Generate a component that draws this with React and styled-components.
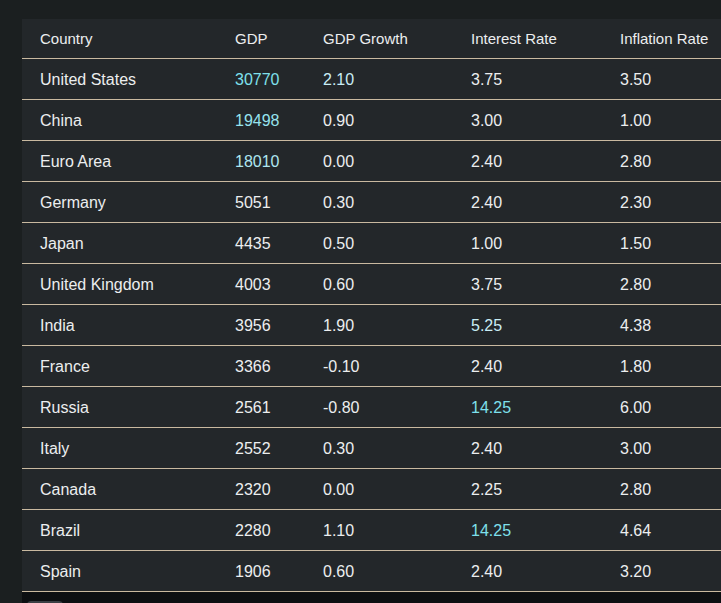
import React from "react";
import styled, { createGlobalStyle } from "styled-components";

const Global = createGlobalStyle`
  html, body { margin: 0; padding: 0; background: #1b1f20; overflow: hidden; }
  body { font-family: "Liberation Sans", Arial, sans-serif; }
`;

const Page = styled.div`
  padding: 19px 0 0 22px;
  width: 721px;
  box-sizing: border-box;
  height: 603px;
  overflow: hidden;
`;

const Scroller = styled.div`
  overflow: hidden;
  width: 100%;
`;

const Table = styled.table`
  border-collapse: collapse;
  background: #23272a;
  width: 1260px;
  table-layout: fixed;
`;

const Th = styled.th`
  text-align: left;
  font-weight: 400;
  font-size: 15px;
  color: #eceeef;
  height: 39px;
  padding: 0 0 0 18px;
  border-bottom: 1px solid #c9b9a0;
  box-sizing: border-box;
  white-space: nowrap;
  width: ${(p) => p.$w}px;
`;

const Td = styled.td`
  font-size: 16px;
  color: ${(p) => p.$c || "#eceeef"};
  height: 38px;
  padding: 2px 0 0 18px;
  border-bottom: 1px solid #c9b9a0;
  white-space: nowrap;
`;

const Track = styled.div`
  height: 12px;
  background: #0c0f12;
  padding: 9px 0 0 5px;
  box-sizing: border-box;
`;

const Thumb = styled.div`
  width: 36px;
  height: 8px;
  border-radius: 4px;
  background: #3a3f44;
`;

const cols = [
  ["Country", 195],
  ["GDP", 88],
  ["GDP Growth", 148],
  ["Interest Rate", 149],
  ["Inflation Rate", 680],
];

const C1 = "#7ee0ec";
const C2 = "#96e3ee";
const C3 = "#aee6f0";
const L = "#c9edf5";

const rows = [
  ["United States", ["30770", C1], ["2.10", L], "3.75", "3.50"],
  ["China", ["19498", C2], "0.90", "3.00", "1.00"],
  ["Euro Area", ["18010", C3], "0.00", "2.40", "2.80"],
  ["Germany", "5051", "0.30", "2.40", "2.30"],
  ["Japan", "4435", "0.50", "1.00", "1.50"],
  ["United Kingdom", "4003", "0.60", "3.75", "2.80"],
  ["India", "3956", "1.90", ["5.25", L], "4.38"],
  ["France", "3366", "-0.10", "2.40", "1.80"],
  ["Russia", "2561", "-0.80", ["14.25", C1], "6.00"],
  ["Italy", "2552", "0.30", "2.40", "3.00"],
  ["Canada", "2320", "0.00", "2.25", "2.80"],
  ["Brazil", "2280", "1.10", ["14.25", C1], "4.64"],
  ["Spain", "1906", "0.60", "2.40", "3.20"],
];

export default function App() {
  return (
    <>
      <Global />
      <Page>
        <Scroller>
          <Table>
            <thead>
              <tr>
                {cols.map(([name, w]) => (
                  <Th key={name} $w={w}>{name}</Th>
                ))}
              </tr>
            </thead>
            <tbody>
              {rows.map((r) => (
                <tr key={r[0]}>
                  {r.map((cell, i) => {
                    const [v, c] = Array.isArray(cell) ? cell : [cell, null];
                    return (
                      <Td key={i} $c={c}>{v}</Td>
                    );
                  })}
                </tr>
              ))}
            </tbody>
          </Table>
          <Track>
            <Thumb />
          </Track>
        </Scroller>
      </Page>
    </>
  );
}
